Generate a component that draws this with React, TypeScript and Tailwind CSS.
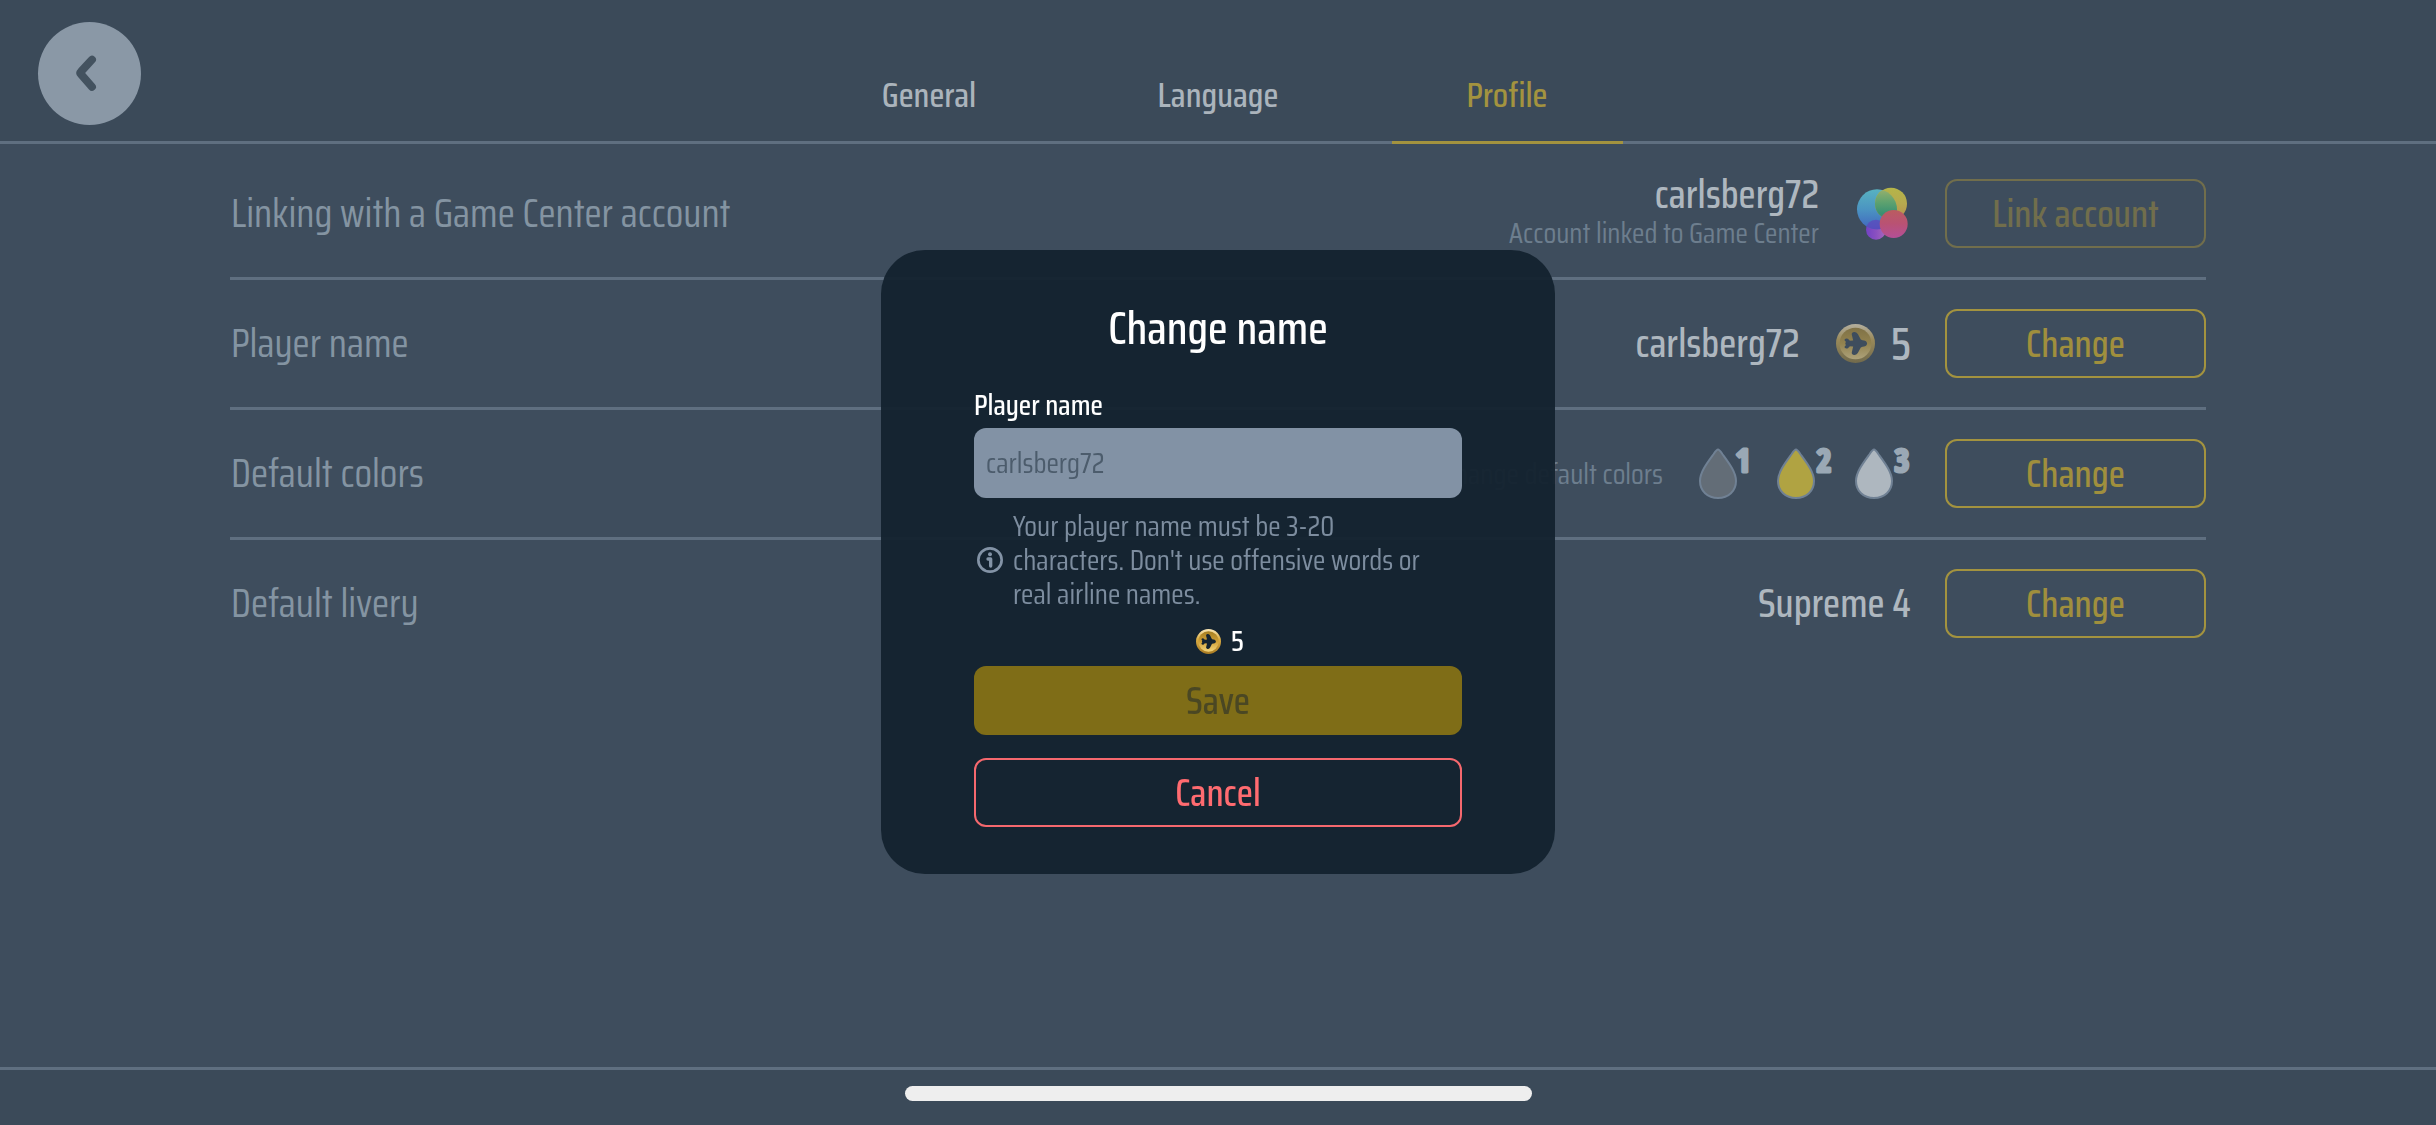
import { useId, type ReactNode } from 'react';

const FONT = "font-['Saira_Condensed','Roboto_Condensed','Liberation_Sans',sans-serif]";

function ChevronIcon() {
  return (
    <svg viewBox="0 0 104 104" className="size-full" fill="none" aria-hidden="true">
      <path
        d="M54.5 38 L43.5 50 Q42 51.500 43.500 53 L54.5 65.500"
        stroke="#43525f"
        strokeWidth="8"
        strokeLinecap="round"
        strokeLinejoin="round"
      />
    </svg>
  );
}

function GameCenterIcon() {
  const id = useId();
  return (
    <svg viewBox="165 77 168 168" className="size-14 shrink-0" role="img" aria-label="Game Center">
      <defs>
        <linearGradient id={id + 'b'} x1="0" y1="0" x2="0" y2="1">
          <stop offset="0" stopColor="#58b2c0" />
          <stop offset="0.5" stopColor="#4b94c2" />
          <stop offset="1" stopColor="#4166bf" />
        </linearGradient>
        <linearGradient id={id + 'y'} x1="0" y1="0" x2="0" y2="1">
          <stop offset="0" stopColor="#b5b548" />
          <stop offset="0.5" stopColor="#b6a94f" />
          <stop offset="1" stopColor="#b88e4e" />
        </linearGradient>
        <linearGradient id={id + 'g'} x1="0" y1="0" x2="0" y2="1">
          <stop offset="0" stopColor="#9db26c" />
          <stop offset="0.45" stopColor="#5fa26f" />
          <stop offset="0.8" stopColor="#3a9172" />
          <stop offset="1" stopColor="#55806c" />
        </linearGradient>
        <linearGradient id={id + 'r'} x1="0" y1="0" x2="0" y2="1">
          <stop offset="0" stopColor="#ba5c60" />
          <stop offset="0.5" stopColor="#b95274" />
          <stop offset="1" stopColor="#b34f97" />
        </linearGradient>
        <linearGradient id={id + 'p'} x1="0" y1="0" x2="1" y2="0">
          <stop offset="0" stopColor="#7242c4" />
          <stop offset="0.5" stopColor="#8a50c0" />
          <stop offset="1" stopColor="#a868bb" />
        </linearGradient>
        <clipPath id={id + 'c'}>
          <circle cx="231" cy="147" r="60" />
        </clipPath>
      </defs>
      <circle cx="228" cy="208" r="30" fill={`url(#${id}p)`} />
      <circle cx="231" cy="147" r="60" fill={`url(#${id}b)`} />
      <g clipPath={`url(#${id}c)`}>
        <circle cx="228" cy="208" r="30" fill="#5f45bd" opacity="0.7" />
      </g>
      <circle cx="273" cy="130" r="48" fill={`url(#${id}y)`} />
      <g clipPath={`url(#${id}c)`}>
        <circle cx="273" cy="130" r="48" fill={`url(#${id}g)`} />
      </g>
      <circle cx="281" cy="191" r="42" fill={`url(#${id}r)`} />
    </svg>
  );
}

function Coin({ dim = false, className }: { dim?: boolean; className: string }) {
  const id = useId();
  return (
    <svg viewBox="0 0 118 118" className={className} aria-hidden="true">
      <defs>
        <linearGradient id={id + 'o'} x1="0" y1="0" x2="0" y2="1">
          <stop offset="0" stopColor={dim ? '#b4af9f' : '#fbe8b8'} />
          <stop offset="0.4" stopColor={dim ? '#9a8a5a' : '#dcae45'} />
          <stop offset="1" stopColor={dim ? '#716a4c' : '#a87a22'} />
        </linearGradient>
        <linearGradient id={id + 'i'} x1="0" y1="0" x2="0" y2="1">
          <stop offset="0" stopColor={dim ? '#7f7146' : '#a67f22'} />
          <stop offset="0.5" stopColor={dim ? '#93834f' : '#cf9f36'} />
          <stop offset="1" stopColor={dim ? '#ada27b' : '#f3d57c'} />
        </linearGradient>
      </defs>
      <circle cx="59" cy="59" r="59" fill={`url(#${id}o)`} />
      <circle cx="59" cy="59" r="48" fill={`url(#${id}i)`} />
      <path
        d="M94 59C94 66 87 69 80 69L75 71L66 88Q61 95 54 94Q46 92 48 85L52 68L42 67L36 73Q30 76 26 71Q25 67 30 64Q26 59 30 54Q25 51 26 47Q30 42 36 45L42 51L52 50L48 33Q46 26 54 24Q61 23 66 30L75 47L80 49C87 49 94 52 94 59Z"
        fill={dim ? '#3e4d5d' : '#152430'}
      />
    </svg>
  );
}

function Drop({ n, fill }: { n: number; fill: string }) {
  return (
    <svg viewBox="0 0 56 52" className="h-[52px] w-14 overflow-visible" role="img" aria-label={`Color ${n}`}>
      <path
        d="M19 1.500C20.500 1.500 22 4 23.300 6C29.500 14.500 37 24 37 33C37 43 29.500 50 19 50C8.500 50 1 43 1 33C1 24 8.500 14.500 14.700 6C16 4 17.500 1.500 19 1.500Z"
        fill={fill}
        stroke="#708194"
        strokeWidth="2"
      />
      <text
        x={n === 1 ? 44 : 47}
        y="24"
        textAnchor="middle"
        fill="#9aa8b5"
        stroke="#9aa8b5"
        strokeWidth="3"
        strokeLinejoin="round"
        className="font-['Open_Sans_Condensed','Open_Sans',sans-serif] text-[32px] font-bold"
      >
        {n}
      </text>
    </svg>
  );
}

function InfoIcon() {
  return (
    <svg viewBox="0 0 78 78" className="size-[26px] shrink-0" fill="none" aria-hidden="true">
      <circle cx="39" cy="39" r="35" stroke="#8393a6" strokeWidth="8" />
      <circle cx="39" cy="22" r="6" fill="#8393a6" />
      <path d="M33 36H41V57" stroke="#8393a6" strokeWidth="10" strokeLinecap="round" strokeLinejoin="round" />
    </svg>
  );
}

function Row({
  label,
  action,
  disabled = false,
  last = false,
  children,
}: {
  label: string;
  action: string;
  disabled?: boolean;
  last?: boolean;
  children: ReactNode;
}) {
  return (
    <section
      className={`flex h-[130px] items-center justify-between border-b-[3px] ${last ? 'border-transparent' : 'border-[#5f6f80]'}`}
    >
      <h2 className="pl-px text-[40px] leading-[58px] text-[#8494a2]">{label}</h2>
      <div className="flex items-center gap-[34px]">
        <div className="flex items-center gap-9">{children}</div>
        <button
          type="button"
          disabled={disabled}
          className={`h-[69px] w-[261px] shrink-0 rounded-xl border-2 text-[38px] leading-none font-medium ${
            disabled ? 'border-[#716e4c] text-[#716e4c]' : 'border-[#a3933f] text-[#a08f3d]'
          }`}
        >
          {action}
        </button>
      </div>
    </section>
  );
}

const tabs = ['General', 'Language', 'Profile'];

export default function App() {
  return (
    <div className={`flex min-h-screen flex-col bg-[#3e4d5d] ${FONT}`}>
      <header className="grid h-36 grid-cols-[1fr_auto_1fr] border-b-[3px] border-[#5f6f80] bg-[#3b4a59]">
        <button
          type="button"
          aria-label="Back"
          className="mt-[22px] ml-[38px] size-[103px] rounded-full bg-[#8a98a6]"
        >
          <ChevronIcon />
        </button>
        <nav className="-mb-[3px] flex gap-[58px] self-end">
          {tabs.map((t) => (
            <button
              key={t}
              type="button"
              aria-current={t === 'Profile' ? 'page' : undefined}
              className={`h-[96px] w-[231px] border-b-[3px] text-[35px] leading-none font-medium ${
                t === 'Profile' ? 'border-[#a3933f] text-[#a3933f]' : 'border-transparent text-[#abb4bc]'
              }`}
            >
              {t}
            </button>
          ))}
        </nav>
      </header>

      <main className="flex-1 px-[230px] pt-[6px]">
        <Row label="Linking with a Game Center account" action="Link account" disabled>
          <div className="text-right">
            <p className="text-[40px] leading-[38px] font-medium text-[#aeb7bf]">carlsberg72</p>
            <p className="text-[29px] leading-[38px] text-[#6d7e8e]">Account linked to Game Center</p>
          </div>
          <GameCenterIcon />
        </Row>
        <Row label="Player name" action="Change">
          <p className="text-[40px] leading-[58px] font-medium text-[#aeb7bf]">carlsberg72</p>
          <div className="flex items-center gap-4">
            <Coin dim className="size-[39px]" />
            <span className="text-[46px] leading-none font-medium text-[#aeb7bf]">5</span>
          </div>
        </Row>
        <Row label="Default colors" action="Change">
          <p className="text-[29px] leading-[38px] text-[#6d7e8e]">Change default colors</p>
          <div className="flex gap-[22px]">
            <Drop n={1} fill="#636d77" />
            <Drop n={2} fill="#b0a342" />
            <Drop n={3} fill="#aeb7bf" />
          </div>
        </Row>
        <Row label="Default livery" action="Change" last>
          <p className="text-[40px] leading-[58px] font-medium text-[#aeb7bf]">Supreme 4</p>
        </Row>
      </main>

      <footer className="flex h-[58px] justify-center border-t-[3px] border-[#5f6f80] bg-[#3b4a59] pt-4">
        <div className="h-[15px] w-[627px] rounded-full bg-[#eeeeee]" />
      </footer>

      <div className="fixed inset-0 flex items-center justify-center pb-px">
        <form
          role="dialog"
          aria-labelledby="dialog-title"
          className="flex w-[674px] flex-col rounded-[44px] bg-[#13222e]/95 px-[93px] pt-[50px] pb-[47px]"
        >
          <h1 id="dialog-title" className="text-center text-[46px] leading-[56px] font-medium text-white">
            Change name
          </h1>
          <label htmlFor="player" className="mt-8 text-[29px] leading-[34px] font-medium text-white">
            Player name
          </label>
          <input
            id="player"
            type="text"
            placeholder="carlsberg72"
            className="mt-[6px] h-[70px] rounded-xl bg-[#8292a5] px-3 text-[29px] text-[#4c5c6c] placeholder:text-[#4c5c6c]"
          />
          <div className="mt-[11px] flex items-center gap-[10px] pr-8 pl-[3px]">
            <InfoIcon />
            <p className="text-[29px] leading-[34px] text-[#7d8d9f]">
              Your player name must be 3-20 characters. Don't use offensive words or real airline names.
            </p>
          </div>
          <div className="mt-[13px] flex items-center justify-center gap-[10px] pl-1">
            <Coin className="size-[25px]" />
            <span className="text-[29px] leading-[34px] font-medium text-white">5</span>
          </div>
          <button
            type="button"
            disabled
            className="mt-2 h-[69px] rounded-xl bg-[#7f6d17] text-[38px] leading-none font-medium text-[#4a4723]"
          >
            Save
          </button>
          <button
            type="button"
            className="mt-[23px] h-[69px] rounded-xl border-2 border-[#f5686e] text-[38px] leading-none font-medium text-[#ff6b70]"
          >
            Cancel
          </button>
        </form>
      </div>
    </div>
  );
}
